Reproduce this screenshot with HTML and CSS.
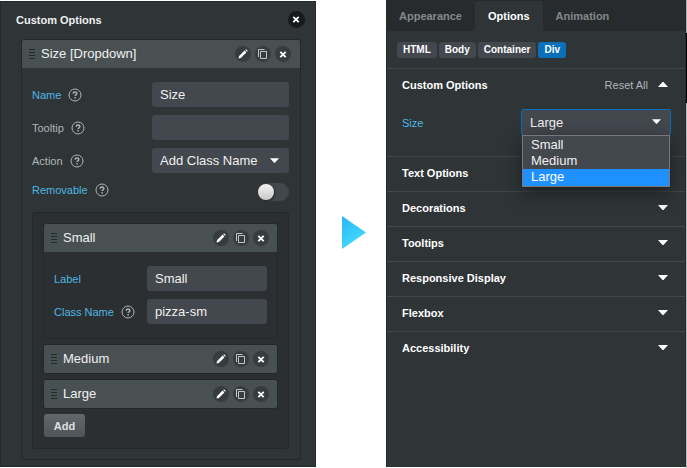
FILE: index.html
```html
<!DOCTYPE html>
<html lang="en">
<head>
<meta charset="utf-8">
<title>Custom Options</title>
<link rel="stylesheet" href="styles.css">
</head>
<body>
<svg class="defs" aria-hidden="true">
  <symbol id="pencil" viewBox="0 0 16 16"><path d="M3.500 12.500l.6-2.400 5.500-5.500 1.800 1.800-5.500 5.500zM10.200 4l.9-.8 1.700 1.700-.8.900z"/></symbol>
  <symbol id="copy" viewBox="0 0 16 16"><path d="M3.500 11V3.500h6M5.500 5.500h6v7h-6z" fill="none" stroke="currentColor"/></symbol>
  <symbol id="cross" viewBox="0 0 16 16"><path d="M5.300 5.800l5.400 5.400M10.700 5.800l-5.400 5.400" fill="none" stroke="currentColor" stroke-width="1.800"/></symbol>
  <symbol id="help" viewBox="0 0 14 14"><circle cx="7" cy="7" r="6" fill="none" stroke="currentColor"/><path d="M5.200 5.800c0-2.400 3.700-2.200 3.700-.2 0 1.300-1.800 1.200-1.800 2.500M7.100 9v1.400" fill="none" stroke="currentColor" stroke-width="1.400"/></symbol>
  <symbol id="grip" viewBox="0 0 6 12"><path d="M0 1.500h6M0 4.500h6M0 7.500h6M0 10.500h6" stroke="currentColor"/></symbol>
  <symbol id="down" viewBox="0 0 10 6"><path d="M0 0h10L5.500 5h-1z"/></symbol>
  <symbol id="up" viewBox="0 0 10 6"><path d="M0 5h10L5.500 0h-1z"/></symbol>
</svg>
<main class="layout">
  <section class="panel editor">
    <header class="editor-head">
      <h1>Custom Options</h1>
      <button class="round dark" aria-label="Close"><svg><use href="#cross"/></svg></button>
    </header>
    <div class="card">
      <header class="card-head">
        <svg class="grip"><use href="#grip"/></svg><h2>Size [Dropdown]</h2>
        <button class="round" aria-label="Edit"><svg><use href="#pencil"/></svg></button>
        <button class="round" aria-label="Copy"><svg class="copy"><use href="#copy"/></svg></button>
        <button class="round" aria-label="Delete"><svg><use href="#cross"/></svg></button>
      </header>
      <div class="fields">
        <div class="field"><label class="set" for="name">Name</label><svg class="help"><use href="#help"/></svg><input class="box" id="name" value="Size"></div>
        <div class="field"><label for="tip">Tooltip</label><svg class="help"><use href="#help"/></svg><input class="box" id="tip"></div>
        <div class="field"><label for="action">Action</label><svg class="help"><use href="#help"/></svg>
          <div class="drop"><select class="box" id="action"><option>Add Class Name</option></select><svg class="arrow"><use href="#down"/></svg></div>
        </div>
        <div class="field short"><label class="set" for="removable">Removable</label><svg class="help"><use href="#help"/></svg><input class="toggle" id="removable" type="checkbox"></div>
      </div>
      <div class="group">
        <div class="card item">
          <header class="card-head">
            <svg class="grip"><use href="#grip"/></svg><h2>Small</h2>
            <button class="round" aria-label="Edit"><svg><use href="#pencil"/></svg></button>
            <button class="round" aria-label="Copy"><svg class="copy"><use href="#copy"/></svg></button>
            <button class="round" aria-label="Delete"><svg><use href="#cross"/></svg></button>
          </header>
          <div class="fields inner">
            <div class="field"><label class="set" for="label">Label</label><input class="box" id="label" value="Small"></div>
            <div class="field"><label class="set" for="class">Class Name</label><svg class="help"><use href="#help"/></svg><input class="box" id="class" value="pizza-sm"></div>
          </div>
        </div>
        <div class="card item">
          <header class="card-head">
            <svg class="grip"><use href="#grip"/></svg><h2>Medium</h2>
            <button class="round" aria-label="Edit"><svg><use href="#pencil"/></svg></button>
            <button class="round" aria-label="Copy"><svg class="copy"><use href="#copy"/></svg></button>
            <button class="round" aria-label="Delete"><svg><use href="#cross"/></svg></button>
          </header>
        </div>
        <div class="card item">
          <header class="card-head">
            <svg class="grip"><use href="#grip"/></svg><h2>Large</h2>
            <button class="round" aria-label="Edit"><svg><use href="#pencil"/></svg></button>
            <button class="round" aria-label="Copy"><svg class="copy"><use href="#copy"/></svg></button>
            <button class="round" aria-label="Delete"><svg><use href="#cross"/></svg></button>
          </header>
        </div>
        <button class="add">Add</button>
      </div>
    </div>
  </section>
  <div class="between">
    <svg class="play" viewBox="0 0 24 33"><defs><linearGradient id="sky" x1="0" y1="0" x2=".5" y2="1"><stop stop-color="#28b4fa"/><stop offset="1" stop-color="#46dcfc"/></linearGradient></defs><path d="M0 0l24 16.500L0 33z" fill="url(#sky)"/></svg>
  </div>
  <section class="panel result">
    <nav class="tabs"><a href="#appearance">Appearance</a><a class="active" href="#options">Options</a><a href="#animation">Animation</a></nav>
    <div class="tags"><button>HTML</button><button>Body</button><button>Container</button><button class="current">Div</button></div>
    <div class="section open">
      <div class="row"><h2>Custom Options</h2><button class="reset">Reset All</button><svg class="arrow"><use href="#up"/></svg></div>
      <div class="size"><label class="set" for="size">Size</label>
        <div class="drop"><select class="box" id="size"><option>Large</option></select><svg class="arrow"><use href="#down"/></svg>
          <ul class="list" role="listbox" aria-label="Size"><li role="option">Small</li><li role="option">Medium</li><li role="option" class="chosen" aria-selected="true">Large</li></ul>
        </div>
      </div>
    </div>
    <div class="section row"><h2>Text Options</h2><svg class="arrow"><use href="#down"/></svg></div>
    <div class="section row"><h2>Decorations</h2><svg class="arrow"><use href="#down"/></svg></div>
    <div class="section row"><h2>Tooltips</h2><svg class="arrow"><use href="#down"/></svg></div>
    <div class="section row"><h2>Responsive Display</h2><svg class="arrow"><use href="#down"/></svg></div>
    <div class="section row"><h2>Flexbox</h2><svg class="arrow"><use href="#down"/></svg></div>
    <div class="section row"><h2>Accessibility</h2><svg class="arrow"><use href="#down"/></svg></div>
  </section>
  <div class="edge"></div>
</main>
</body>
</html>
```
FILE: styles.css
```css
* { box-sizing: border-box; }
body { margin: 0; background: #fff; color: #f0f0f0; font: 11px/16px "Liberation Sans", Arial, sans-serif; }
h1, h2 { margin: 0; font-size: 11px; line-height: 16px; }
button, input, select { margin: 0; border: 0; font: inherit; color: inherit; }
button { padding: 0; }
.defs { position: absolute; width: 0; height: 0; }
.layout { display: grid; grid-template-columns: 316fr 70fr 300fr 1px; min-height: 100vh; }
.panel { background: #2f3437; border: 1px solid #24292b; min-width: 0; }
.editor { margin: 1px 0; padding: 0 14px 4px 20px; }
.editor-head { display: flex; justify-content: space-between; align-items: center; height: 35px; margin: 0 -4px 2px -5px; }
.round { width: 16px; height: 16px; border-radius: 50%; background: #373d3f; display: flex; }
.round svg { width: 16px; height: 16px; fill: #fff; color: #fff; }
.round svg.copy { color: #c0c4c6; }
.round.dark { width: 17px; height: 17px; background: #17191b; }
.card { border: 1px solid #23282a; border-radius: 3px; }
.card-head { display: flex; align-items: center; gap: 4px; height: 28px; padding: 0 9px 0 7px; background: #495052; border-radius: 2px 2px 0 0; }
.item .card-head { padding-right: 8px; }
.card-head h2 { flex: 1; font-size: 13px; font-weight: 400; margin-left: 2px; }
.grip { width: 6px; height: 12px; color: #24292b; }
.fields { display: grid; gap: 8px; padding: 14px 11px 11px 10px; }
.field { display: flex; align-items: center; height: 25px; }
.field > :last-child { margin-left: auto; }
label { color: #b0b4b6; }
.set { color: #4eb7e3; }
.help { width: 14px; height: 14px; margin-left: 7px; color: #b0b4b6; }
.box { width: 137px; height: 25px; padding: 0 8px; border-radius: 3px; background: #43474e; color: #f0f0f0; font-size: 13px; appearance: none; display: block; }
.drop { position: relative; }
.arrow { width: 10px; height: 6px; fill: #fff; }
.drop > .arrow { position: absolute; right: 10px; top: 10px; width: 9px; pointer-events: none; }
.short { height: 18px; }
.short label, .short .help { align-self: flex-start; line-height: 14px; }
.fields .short { margin-top: 2px; }
.toggle { appearance: none; width: 31px; height: 18px; border-radius: 9px; background: #43474e; padding: 1px 0; }
.toggle::before { content: ""; display: block; width: 16px; height: 16px; border-radius: 50%; background: linear-gradient(#f4f4f4, #c8c8c8); box-shadow: 1px 1px 2px #24292b; }
.group { display: grid; gap: 5px; margin: 0 11px 10px 10px; padding: 10px 10px 11px; border: 1px solid #23282a; border-radius: 3px; background: #2b2f31; }
.inner { padding: 14px 10px; }
.inner .box { width: 120px; }
.item .card-head:last-child { border-radius: 2px; }
.add { justify-self: start; width: 41px; height: 23px; margin-left: 1px; border-radius: 3px; background: linear-gradient(#62676b, #4f5458); font-weight: 700; color: #dfe1e2; }
.between { display: grid; place-items: center; padding: 0 0 3px 6px; }
.play { width: 24px; height: 33px; }
.result { border-width: 1px 1px 0; margin-bottom: 1px; }
.tabs { display: flex; height: 30px; background: #272b2d; }
.tabs a { padding: 0 13px; line-height: 30px; color: #84888a; font-weight: 700; text-decoration: none; }
.tabs a:first-child { padding-left: 12px; }
.tabs .active { background: #2f3437; color: #fff; border-radius: 3px 3px 0 0; }
.tags { display: flex; gap: 2px; padding: 11px 10px 10px; }
.tags button { height: 16px; padding: 0 6px; border-radius: 3px; background: #43474e; color: #fff; font-size: 10px; font-weight: 700; }
.tags .current { background: #0b70ba; }
.section { border-top: 1px solid #42474a; }
.row { display: flex; align-items: center; height: 35px; padding: 0 17px 0 15px; }
.section.row { padding-bottom: 2px; }
.row h2 { flex: 1; color: #fff; }
.open { height: 88px; }
.open .row { height: 32px; }
.reset { background: none; color: #b0b4b6; margin-right: 10px; }
.size { display: flex; align-items: center; justify-content: space-between; padding: 8px 14px 0 15px; }
.size .box { width: 150px; height: 27px; border: 1px solid #0b70ba; }
.list { position: absolute; z-index: 2; top: 26px; left: 1px; right: 1px; margin: 0; padding: 1px 0 0; list-style: none; border: 1px solid #777; background: #43474e; font-size: 13px; line-height: 16px; box-shadow: 0 6px 18px #1b1f21; }
.list li { padding: 0 8px; }
.list .chosen { padding-bottom: 1px; background: #1e90ff; color: #fff; }
.edge { background: linear-gradient(#aaa 33px, #000 33px 103px, #bbb 103px); }
```
